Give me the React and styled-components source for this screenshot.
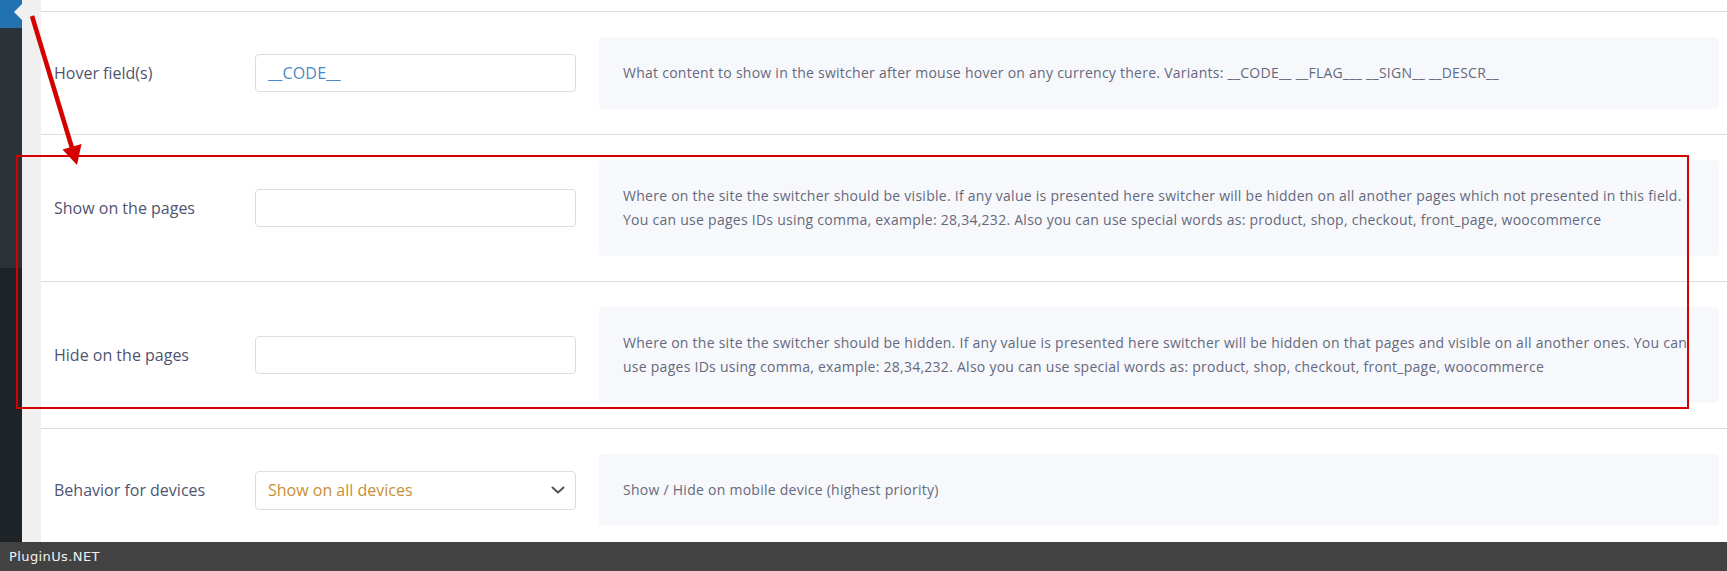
import React from "react";
import styled, { createGlobalStyle } from "styled-components";

const Global = createGlobalStyle`
  html, body { margin: 0; padding: 0; height: 100%; overflow: hidden; background: #fff; }
  body { font-family: "Open Sans", "Noto Sans", sans-serif; }
  #root { height: 100%; }
`;

const Screen = styled.div`
  position: relative;
  display: flex;
  height: 571px;
  width: 100%;
  overflow: hidden;
`;

const Sidebar = styled.nav`
  width: 22px;
  flex: none;
  display: flex;
  flex-direction: column;
  background: #1d2327;
`;

const MenuCurrent = styled.div`
  position: relative;
  height: 28px;
  background: #2271b1;
  &::after {
    content: "";
    position: absolute;
    right: 0;
    top: 4px;
    border-style: solid;
    border-width: 8px 8px 8px 0;
    border-color: transparent #f0f0f1 transparent transparent;
  }
`;

const SubMenu = styled.div`
  height: 240px;
  background: #2c3338;
`;

const Gutter = styled.div`
  width: 19px;
  flex: none;
  background: #f0f0f1;
`;

const Content = styled.main`
  flex: 1;
  background: #fff;
  padding-top: 11px;
`;

const Row = styled.section`
  display: grid;
  grid-template-columns: 178px 321px 1fr;
  column-gap: 23px;
  align-items: center;
  padding: 25px 8px 25px 13px;
  border-top: 1px solid #dcdde1;
`;

const Label = styled.div`
  font-size: 16px;
  color: #4f5470;
  line-height: 20px;
`;

const TextInput = styled.div`
  box-sizing: border-box;
  height: 38px;
  border: 1px solid #dcdde2;
  border-radius: 4px;
  background: #fff;
  padding: 0 12px;
  display: flex;
  align-items: center;
  font-size: 16px;
  letter-spacing: 0.2px;
  color: #4a88c8;
`;

const Select = styled(TextInput)`
  height: 39px;
  justify-content: space-between;
  color: #c88f35;
  padding-right: 10px;
  letter-spacing: 0;
`;

const Chevron = styled.svg`
  width: 14px;
  height: 8px;
  flex: none;
`;

const Desc = styled.div`
  background: #f7f8fb;
  border-radius: 4px;
  padding: 24px 24px;
  font-size: 14px;
  letter-spacing: 0.26px;
  line-height: 24px;
  color: #65697d;
`;

const Frame = styled.div`
  position: absolute;
  left: 16px;
  top: 155px;
  width: 1673px;
  height: 254px;
  box-sizing: border-box;
  border: 2px solid #d50000;
  pointer-events: none;
`;

const ArrowSvg = styled.svg`
  position: absolute;
  left: 0;
  top: 0;
  width: 120px;
  height: 200px;
  pointer-events: none;
`;

const Footer = styled.footer`
  position: fixed;
  left: 0;
  right: 0;
  bottom: 0;
  height: 29px;
  background: #424242;
  color: #f2f2f2;
  font-family: "DejaVu Sans", sans-serif;
  font-size: 13px;
  letter-spacing: 0.4px;
  display: flex;
  align-items: center;
  padding-left: 9px;
`;

const rows = [
  {
    label: "Hover field(s)",
    value: "__CODE__",
    desc: "What content to show in the switcher after mouse hover on any currency there. Variants: __CODE__ __FLAG___ __SIGN__ __DESCR__",
  },
  {
    label: "Show on the pages",
    value: "",
    desc: "Where on the site the switcher should be visible. If any value is presented here switcher will be hidden on all another pages which not presented in this field. You can use pages IDs using comma, example: 28,34,232. Also you can use special words as: product, shop, checkout, front_page, woocommerce",
  },
  {
    label: "Hide on the pages",
    value: "",
    desc: "Where on the site the switcher should be hidden. If any value is presented here switcher will be hidden on that pages and visible on all another ones. You can use pages IDs using comma, example: 28,34,232. Also you can use special words as: product, shop, checkout, front_page, woocommerce",
  },
];

export default function App() {
  return (
    <>
      <Global />
      <Screen>
        <Sidebar>
          <MenuCurrent />
          <SubMenu />
        </Sidebar>
        <Gutter />
        <Content>
          {rows.map((r) => (
            <Row key={r.label}>
              <Label>{r.label}</Label>
              <TextInput>{r.value}</TextInput>
              <Desc>{r.desc}</Desc>
            </Row>
          ))}
          <Row>
            <Label>Behavior for devices</Label>
            <Select>
              <span>Show on all devices</span>
              <Chevron viewBox="0 0 14 8">
                <path d="M1.5 1.5 L7 6.5 L12.5 1.5" fill="none" stroke="#50545c" strokeWidth="2" strokeLinecap="round" strokeLinejoin="round" />
              </Chevron>
            </Select>
            <Desc>Show / Hide on mobile device (highest priority)</Desc>
          </Row>
        </Content>
        <Frame />
        <ArrowSvg viewBox="0 0 120 200">
          <line x1="32" y1="16" x2="72" y2="148" stroke="#d50000" strokeWidth="4.5" />
          <polygon points="77,165 62.5,149.5 81.5,144" fill="#d50000" />
        </ArrowSvg>
        <Footer>PluginUs.NET</Footer>
      </Screen>
    </>
  );
}
